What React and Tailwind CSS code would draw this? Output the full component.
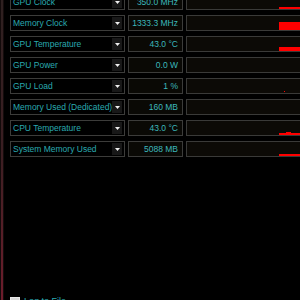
import React from 'react';

const rows = [
  { label: 'GPU Clock', value: '350.0 MHz', bars: [{ x: 92, h: 2 }] },
  { label: 'Memory Clock', value: '1333.3 MHz', bars: [{ x: 92, h: 8 }] },
  { label: 'GPU Temperature', value: '43.0 °C', bars: [{ x: 92, h: 4 }] },
  { label: 'GPU Power', value: '0.0 W', bars: [] },
  { label: 'GPU Load', value: '1 %', bars: [{ x: 97, h: 1, w: 1, y: 1 }] },
  { label: 'Memory Used (Dedicated)', value: '160 MB', bars: [] },
  { label: 'CPU Temperature', value: '43.0 °C', bars: [{ x: 92, h: 2 }, { x: 99, h: 3, w: 5 }] },
  { label: 'System Memory Used', value: '5088 MB', bars: [{ x: 92, h: 2 }] },
];

// little sparkline area on the right of each row
const Graph = ({ bars }) => (
  <div className="h-[16px] w-[130px] shrink-0 border border-[#3a3a38] bg-[#0c0a06]">
    <svg width="128" height="14" className="block">
      {bars.map((b, i) => (
        <rect
          key={i}
          x={b.x}
          y={14 - b.h - (b.y || 0)}
          width={b.w || 40}
          height={b.h}
          fill="#ff0000"
        />
      ))}
    </svg>
  </div>
);

const Row = ({ label, value, bars }) => (
  <div className="flex gap-[3px]">
    <div className="flex h-[16px] w-[115px] shrink-0 items-center justify-between border border-[#3c3c3a] bg-black pl-[2px] pr-[2px]">
      <span className="whitespace-nowrap text-[8.5px] leading-none text-[#2aaab0]">{label}</span>
      <span className="flex h-[12px] w-[10px] items-center justify-center bg-[#181818]">
        <svg width="5" height="3" viewBox="0 0 5 3">
          <path d="M0 0h5L2.5 3z" fill="#f0f0f0" />
        </svg>
      </span>
    </div>
    <div className="flex h-[16px] w-[55px] shrink-0 items-center justify-end border border-[#3c3c3a] bg-[#0a0905] pr-[4px]">
      <span className="whitespace-nowrap text-[8.5px] leading-none text-[#3cb8bc]">{value}</span>
    </div>
    <Graph bars={bars} />
  </div>
);

export default function App() {
  return (
    <div
      className="flex h-[300px] w-[300px] overflow-hidden bg-black"
      style={{ fontFamily: '"Liberation Sans", Arial, sans-serif' }}
    >
      <div className="flex w-[4px] shrink-0">
        <div className="w-[1px] bg-[#120a0a]" />
        <div className="w-[2px] bg-gradient-to-b from-[#2e2020] via-[#3a1e22] to-[#6e1c2c]" />
        <div className="w-[1px] bg-[#140c0c]" />
      </div>
      <div className="flex flex-col pl-[6px]">
        <div className="-mt-[6px] flex flex-col gap-[5px]">
          {rows.map((r) => (
            <Row key={r.label} {...r} />
          ))}
        </div>
        <div className="mt-[140px] flex items-start gap-[4px]">
          <span className="h-[10px] w-[10px] shrink-0 border border-[#e8e8e8] bg-[#d8d8d8]" />
          <span className="text-[9px] leading-none text-[#2aaab0]">Log to File</span>
        </div>
      </div>
    </div>
  );
}
